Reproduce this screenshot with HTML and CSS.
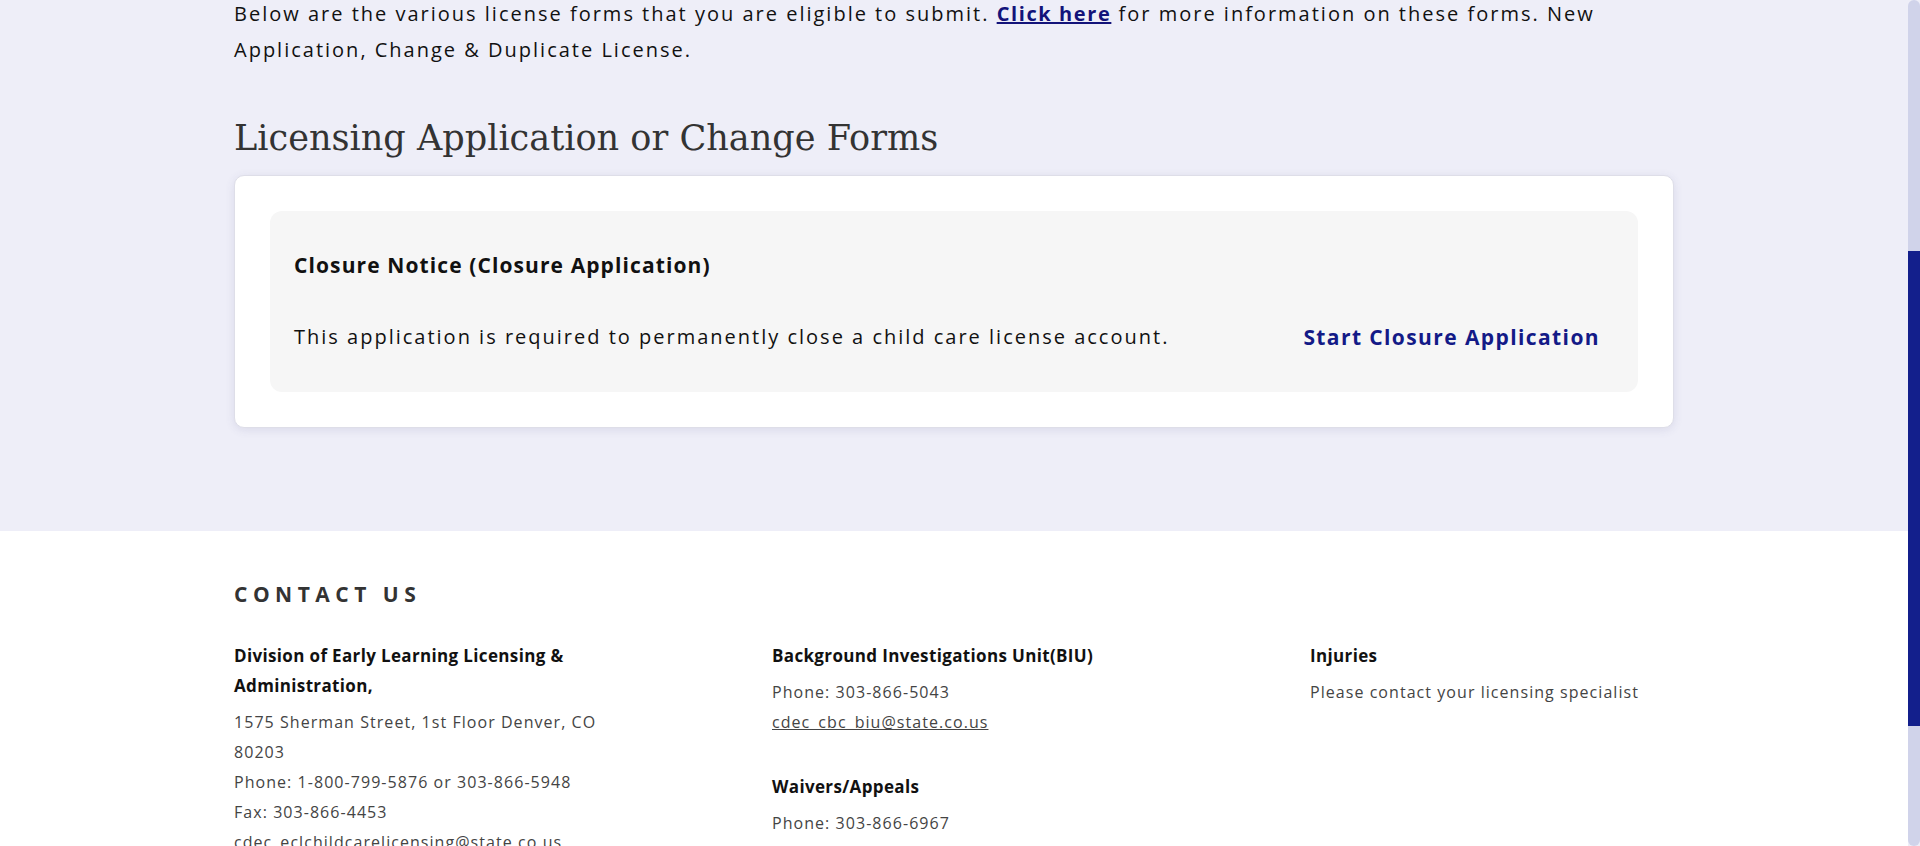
FILE: index.html
```html
<!DOCTYPE html>
<html lang="en">
<head>
<meta charset="utf-8">
<title>Licensing Application or Change Forms</title>
<link rel="stylesheet" href="styles.css">
</head>
<body>
<div class="page">
  <main class="main">
    <p class="intro">Below are the various license forms that you are eligible to submit. <a href="#" class="intro-link">Click here</a> for more information on these forms. New Application, Change &amp; Duplicate License.</p>
    <h1 class="section-title">Licensing Application or Change Forms</h1>
    <section class="card">
      <div class="form-item">
        <h2 class="form-title">Closure Notice (Closure Application)</h2>
        <div class="form-row">
          <p class="form-desc">This application is required to permanently close a child care license account.</p>
          <a href="#" class="form-action">Start Closure Application</a>
        </div>
      </div>
    </section>
  </main>
  <footer class="footer">
    <div class="footer-inner">
      <h2 class="footer-title">CONTACT US</h2>
      <div class="footer-grid">
        <div class="footer-col">
          <div class="contact-block">
            <h3 class="contact-head">Division of Early Learning Licensing &amp; Administration,</h3>
            <p class="contact-line">1575 Sherman Street, 1st Floor Denver, CO 80203</p>
            <p class="contact-line">Phone: 1-800-799-5876 or 303-866-5948</p>
            <p class="contact-line">Fax: 303-866-4453</p>
            <p class="contact-line">cdec_eclchildcarelicensing@state.co.us</p>
          </div>
        </div>
        <div class="footer-col">
          <div class="contact-block">
            <h3 class="contact-head">Background Investigations Unit(BIU)</h3>
            <p class="contact-line">Phone: 303-866-5043</p>
            <p class="contact-line"><a href="#" class="contact-mail">cdec_cbc_biu@state.co.us</a></p>
          </div>
          <div class="contact-block">
            <h3 class="contact-head">Waivers/Appeals</h3>
            <p class="contact-line">Phone: 303-866-6967</p>
            <p class="contact-line"><a href="#" class="contact-mail">cdec_childcarewaivers@state.co.us</a></p>
          </div>
        </div>
        <div class="footer-col">
          <div class="contact-block">
            <h3 class="contact-head">Injuries</h3>
            <p class="contact-line">Please contact your licensing specialist</p>
          </div>
        </div>
      </div>
    </div>
  </footer>
</div>
<div class="scrollbar"><div class="scrollbar-thumb"></div></div>
</body>
</html>
```

FILE: styles.css
```css
html, body {
  margin: 0;
  padding: 0;
  height: 846px;
  overflow: hidden;
  background: #eeeef8;
  font-family: "Open Sans", "Noto Sans", sans-serif;
  color: #111;
}

.page {
  width: 1908px;
}

.main {
  width: 1440px;
  margin: 0 auto;
  padding-bottom: 103px;
}

.intro {
  margin: -4.5px 0 0;
  font-size: 20px;
  line-height: 36.7px;
  letter-spacing: 2px;
  color: #111;
}

.intro-link {
  color: #13137a;
  font-weight: 700;
  letter-spacing: 1.6px;
  text-decoration: underline;
}

.section-title {
  margin: 47.5px 0 14.5px;
  font-family: "DejaVu Serif", serif;
  font-weight: 400;
  font-size: 35.1px;
  line-height: 44px;
  color: #333;
}

.card {
  background: #fff;
  border: 1px solid #dedee8;
  border-radius: 10px;
  padding: 35px;
  box-shadow: 0 2px 10px rgba(70, 70, 130, 0.12);
}

.form-item {
  background: #f6f6f6;
  border-radius: 12px;
  padding: 39.5px 38px 39.5px 24px;
}

.form-title {
  margin: 0 0 42px;
  font-size: 21px;
  line-height: 30px;
  font-weight: 700;
  letter-spacing: 1.1px;
  color: #111;
}

.form-row {
  display: flex;
  justify-content: space-between;
  align-items: center;
}

.form-desc {
  margin: 0;
  font-size: 20px;
  line-height: 30px;
  letter-spacing: 2px;
  color: #111;
}

.form-action {
  font-size: 21px;
  line-height: 30px;
  font-weight: 700;
  letter-spacing: 1.4px;
  color: #131a87;
  text-decoration: none;
}

.footer {
  background: #fff;
  padding: 48.5px 0 60px;
}

.footer-inner {
  width: 1440px;
  margin: 0 auto;
}

.footer-title {
  margin: 0 0 32px;
  font-size: 21px;
  line-height: 30px;
  font-weight: 700;
  letter-spacing: 5.5px;
  color: #333;
}

.footer-grid {
  display: grid;
  grid-template-columns: 538px 538px 1fr;
}

.footer-col {
  max-width: 390px;
}

.contact-block + .contact-block {
  margin-top: 35px;
}

.contact-head {
  margin: 0 0 6px;
  font-size: 17px;
  line-height: 30px;
  font-weight: 700;
  letter-spacing: 0.35px;
  color: #111;
}

.contact-line {
  margin: 0;
  font-size: 16px;
  line-height: 30px;
  letter-spacing: 1.05px;
  color: #444;
}

.contact-mail {
  color: #444;
  text-decoration: underline;
}

.scrollbar {
  position: fixed;
  top: 0;
  right: 0;
  width: 12px;
  height: 846px;
  background: #d0d3ea;
  border-radius: 6px;
  overflow: hidden;
}

.scrollbar-thumb {
  margin-top: 251px;
  height: 475px;
  background: #131f8c;
}
```
